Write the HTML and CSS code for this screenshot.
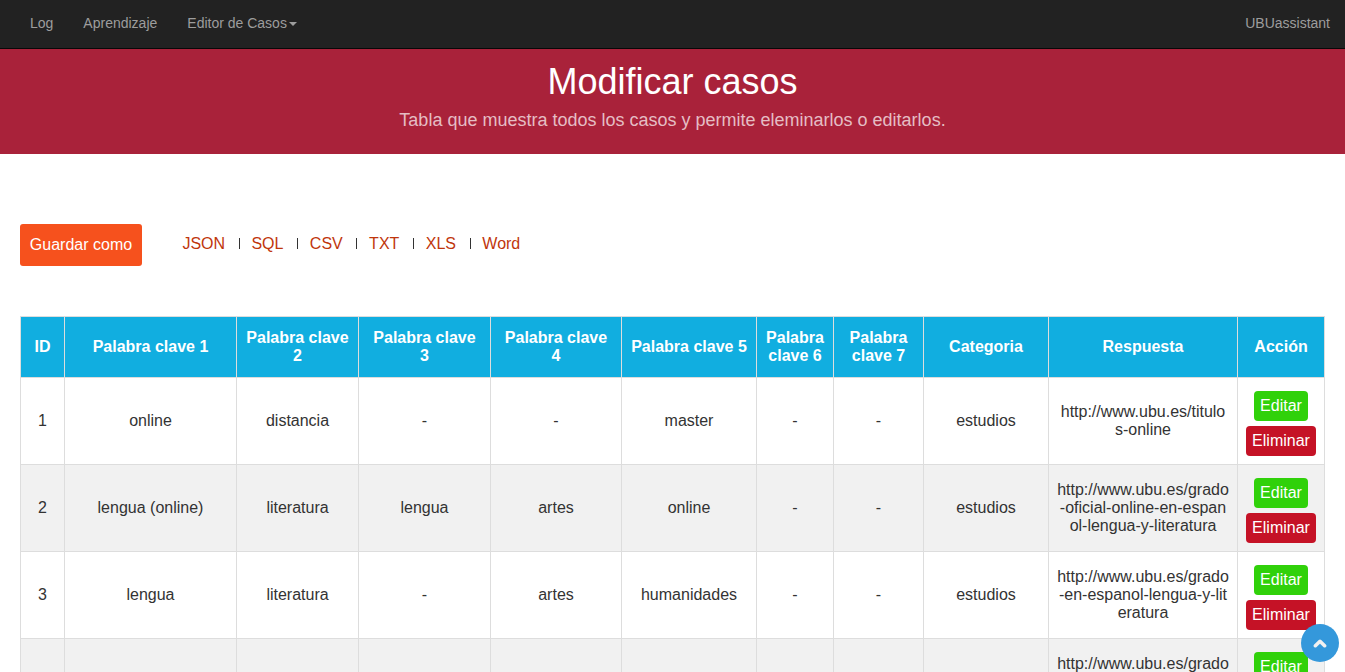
FILE: index.html
```html
<!DOCTYPE html>
<html lang="es">
<head>
<meta charset="utf-8">
<title>Modificar casos</title>
<link rel="stylesheet" href="styles.css">
</head>
<body>
<nav class="navbar">
  <a class="nav-link">Log</a>
  <a class="nav-link">Aprendizaje</a>
  <a class="nav-link">Editor de Casos<span class="caret"></span></a>
  <a class="nav-link nav-brand">UBUassistant</a>
</nav>
<header class="banner">
  <h1 class="banner-title">Modificar casos</h1>
  <p class="banner-text">Tabla que muestra todos los casos y permite eleminarlos o editarlos.</p>
</header>
<main class="content">
  <div class="export">
    <span class="export-label">Guardar como</span>
    <ul class="export-list">
      <li class="export-item">JSON</li>
      <li class="export-item">SQL</li>
      <li class="export-item">CSV</li>
      <li class="export-item">TXT</li>
      <li class="export-item">XLS</li>
      <li class="export-item">Word</li>
    </ul>
  </div>
  <table class="cases">
    <colgroup>
      <col class="c-id"><col class="c-k1"><col class="c-k2"><col class="c-k3"><col class="c-k4"><col class="c-k5"><col class="c-k6"><col class="c-k7"><col class="c-cat"><col class="c-resp"><col class="c-act">
    </colgroup>
    <thead>
      <tr><th>ID</th><th>Palabra clave 1</th><th>Palabra clave 2</th><th>Palabra clave 3</th><th>Palabra clave 4</th><th>Palabra clave 5</th><th>Palabra clave 6</th><th>Palabra clave 7</th><th>Categoria</th><th>Respuesta</th><th>Acción</th></tr>
    </thead>
    <tbody>
      <tr><td>1</td><td>online</td><td>distancia</td><td>-</td><td>-</td><td>master</td><td>-</td><td>-</td><td>estudios</td><td class="url">http://www.ubu.es/titulos-online</td><td class="actions"><a class="btn btn-edit">Editar</a><a class="btn btn-delete">Eliminar</a></td></tr>
      <tr><td>2</td><td>lengua (online)</td><td>literatura</td><td>lengua</td><td>artes</td><td>online</td><td>-</td><td>-</td><td>estudios</td><td class="url">http://www.ubu.es/grado-oficial-online-en-espanol-lengua-y-literatura</td><td class="actions"><a class="btn btn-edit">Editar</a><a class="btn btn-delete">Eliminar</a></td></tr>
      <tr><td>3</td><td>lengua</td><td>literatura</td><td>-</td><td>artes</td><td>humanidades</td><td>-</td><td>-</td><td>estudios</td><td class="url">http://www.ubu.es/grado-en-espanol-lengua-y-literatura</td><td class="actions"><a class="btn btn-edit">Editar</a><a class="btn btn-delete">Eliminar</a></td></tr>
      <tr><td></td><td></td><td></td><td></td><td></td><td></td><td></td><td></td><td></td><td class="url url-top">http://www.ubu.es/grado</td><td class="actions"><a class="btn btn-edit">Editar</a></td></tr>
    </tbody>
  </table>
</main>
<a class="to-top" aria-label="Subir">
  <svg width="14" height="10" viewBox="0 0 14 10"><path d="M2.4 7.7 7 3.3l4.6 4.4" fill="none" stroke="#f1f1f1" stroke-width="3.6" stroke-linecap="round" stroke-linejoin="round"/></svg>
</a>
</body>
</html>
```
FILE: styles.css
```css
* { box-sizing: border-box; }
body {
  margin: 0;
  height: 672px;
  overflow: hidden;
  background: #fff;
  color: #333;
  font: 16px/18px "Liberation Sans", Arial, sans-serif;
}
.navbar {
  display: flex;
  height: 49px;
  padding: 0 0 0 15px;
  background: #222;
  border-bottom: 1px solid #080808;
}
.nav-link {
  display: flex;
  align-items: center;
  padding: 0 15px 2px;
  color: #9d9d9d;
  font-size: 14px;
  line-height: 20px;
}
.nav-brand { margin-left: auto; }
.caret {
  margin: 2px 0 0 2px;
  border-top: 4px solid #9d9d9d;
  border-left: 4px solid transparent;
  border-right: 4px solid transparent;
}
.banner {
  height: 105px;
  padding-top: 13px;
  background: #a9223a;
  text-align: center;
}
.banner-title {
  margin: 0;
  color: #fff;
  font-size: 36px;
  font-weight: 400;
  line-height: 40px;
}
.banner-text {
  margin: 6px 0 0;
  color: #e5bdc4;
  font-size: 18px;
  line-height: 25px;
}
.content { padding: 70px 20px 0; }
.export {
  display: flex;
  height: 42px;
  margin-bottom: 50px;
}
.export-label {
  width: 122px;
  padding: 12px 0;
  border-radius: 3px;
  background: #f6511d;
  color: #fff;
  text-align: center;
}
.export-list {
  display: flex;
  margin: 0;
  padding: 11px 0 0 40.4px;
  list-style: none;
}
.export-item {
  display: flex;
  align-items: center;
  height: 18px;
  color: #bf360c;
}
.export-item + .export-item::before {
  content: "";
  width: 1px;
  height: 11px;
  margin: 0 11.7px 1px 13.7px;
  background: #333;
}
.cases {
  width: 1305px;
  table-layout: fixed;
  border-collapse: separate;
  border-spacing: 0;
  border: solid #ddd;
  border-width: 1px 0 0 1px;
  text-align: center;
}
.c-id { width: 44px; }
.c-k1 { width: 172px; }
.c-k2 { width: 122px; }
.c-k3 { width: 132px; }
.c-k4 { width: 131px; }
.c-k5 { width: 135px; }
.c-k6 { width: 77px; }
.c-k7 { width: 90px; }
.c-cat { width: 125px; }
.c-resp { width: 189px; }
.c-act { width: 87px; }
.cases th,
.cases td {
  padding: 0 8px;
  border: solid #ddd;
  border-width: 0 1px 1px 0;
  vertical-align: middle;
}
.cases th {
  height: 61px;
  background: #11aee0;
  color: #fff;
}
.cases td { height: 87px; }
.cases tbody tr:nth-child(even) { background: #f1f1f1; }
.cases .url { word-break: break-all; }
.cases .url-top {
  padding-top: 16px;
  vertical-align: top;
}
.cases .actions {
  padding: 13px 0 0;
  vertical-align: top;
}
.btn {
  display: block;
  width: fit-content;
  height: 30px;
  margin: 0 auto 5px;
  padding: 6px;
  border-radius: 4px;
  color: #fff;
}
.btn-edit { background: #30d10a; }
.btn-delete { background: #c51226; }
.to-top {
  position: fixed;
  right: 6px;
  bottom: 10px;
  display: flex;
  align-items: center;
  justify-content: center;
  width: 38px;
  height: 38px;
  border-radius: 50%;
  background: #3498db;
}
```
